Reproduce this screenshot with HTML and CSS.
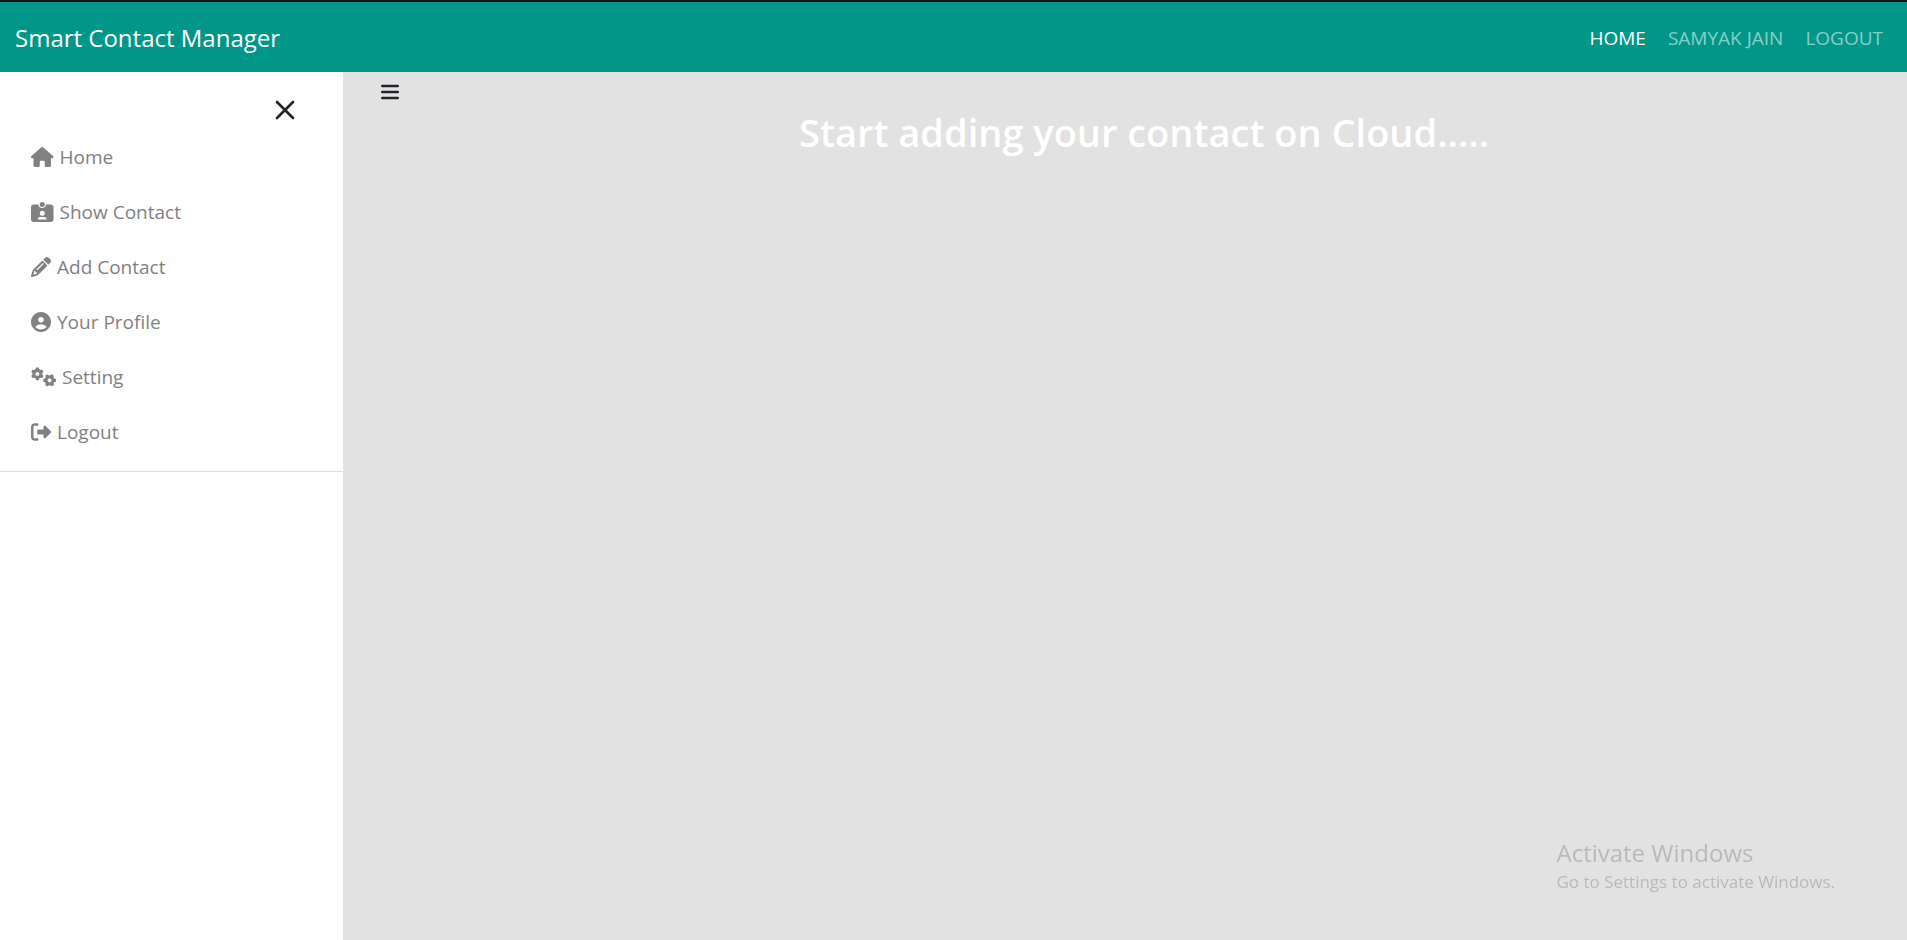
FILE: index.html
```html
<!DOCTYPE html>
<html lang="en">
<head>
<meta charset="utf-8">
<meta name="viewport" content="width=device-width, initial-scale=1">
<title>Smart Contact Manager</title>
<link rel="stylesheet" href="styles.css">
</head>
<body>
<header class="navbar">
  <a class="brand" href="#">Smart Contact Manager</a>
  <nav class="nav-links">
    <a class="nav-link active" href="#">HOME</a>
    <a class="nav-link" href="#">SAMYAK JAIN</a>
    <a class="nav-link" href="#">LOGOUT</a>
  </nav>
</header>
<div class="layout">
  <aside class="sidebar">
    <button class="close" type="button" aria-label="Close menu">
      <svg class="close-icon" viewBox="0 0 20 20"><path d="M2 2L18 18M18 2L2 18" fill="none" stroke="currentColor" stroke-width="2.6" stroke-linecap="round"/></svg>
    </button>
    <nav class="menu">
      <a class="item" href="#"><svg class="icon" viewBox="0 0 576 512"><path d="M575.8 255.5c0 18-15 32.1-32 32.1h-32l.7 160.2c0 2.7-.2 5.4-.5 8.1V472c0 22.1-17.9 40-40 40H392c-22.1 0-40-17.9-40-40V384c0-17.7-14.3-32-32-32H256c-17.7 0-32 14.3-32 32v88c0 22.1-17.9 40-40 40H104c-22.1 0-40-17.9-40-40V287.6H32c-18 0-32-14-32-32.1c0-9 3-17 10-24L266.4 8c7-7 15-8 22-8s15 2 21 7L564.8 231.5c8 7 12 15 11 24z"/></svg>Home</a>
      <a class="item" href="#"><svg class="icon" viewBox="0 0 576 512"><path fill-rule="evenodd" d="M288 0a64 64 0 1 1 0 128 64 64 0 1 1 0-128zM64 64h130c-6 52 40 92 94 92s100-40 94-92h130c35.3 0 64 28.7 64 64v320c0 35.3-28.7 64-64 64H64c-35.3 0-64-28.7-64-64V128c0-35.3 28.7-64 64-64zM176 437.300c0 5.900 4.800 10.700 10.700 10.700h202.600c5.900 0 10.700-4.800 10.700-10.700c0-29.500-23.900-53.300-53.300-53.300H229.300c-29.500 0-53.300 23.900-53.300 53.300zM288 352a64 64 0 1 0 0-128 64 64 0 1 0 0 128z"/></svg>Show Contact</a>
      <a class="item" href="#"><svg class="icon" viewBox="0 0 512 512"><path fill-rule="evenodd" d="M410.3 231l11.3-11.3-33.9-33.9-62.1-62.1L291.7 89.800l-11.3 11.300-22.600 22.600L58.600 322.900c-10.400 10.400-18 23.300-22.200 37.400L1 480.700c-2.500 8.400-.2 17.500 6.100 23.700s15.300 8.500 23.700 6.100l120.300-35.400c14.100-4.200 27-11.800 37.400-22.200L387.700 253.700 410.300 231zM160 399.400l-9.100 22.700c-4 3.100-8.500 5.400-13.300 6.900L59.400 452l23-78.100c1.400-4.900 3.800-9.400 6.900-13.300l22.700-9.100v32c0 8.800 7.200 16 16 16h32zM362.700 18.700L348.300 33.200 325.700 55.800 314.300 67.100l33.900 33.900 62.100 62.100 33.900 33.900 11.300-11.300 22.600-22.600 14.500-14.500c25-25 25-65.500 0-90.500L453.300 18.700c-25-25-65.500-25-90.500 0zm-47.400 168l-144 144c-6.200 6.200-16.400 6.200-22.600 0s-6.200-16.400 0-22.600l144-144c6.200-6.200 16.400-6.200 22.600 0s6.200 16.400 0 22.600z"/></svg>Add Contact</a>
      <a class="item" href="#"><svg class="icon" viewBox="0 0 512 512"><path fill-rule="evenodd" d="M399 384.200C376.900 345.800 335.400 320 288 320H224c-47.400 0-88.900 25.800-111 64.200c35.200 39.200 86.200 63.800 143 63.800s107.800-24.700 143-63.800zM512 256c0 141.400-114.600 256-256 256S0 397.400 0 256S114.600 0 256 0S512 114.600 512 256zM256 272c39.800 0 72-32.200 72-72s-32.200-72-72-72s-72 32.200-72 72s32.200 72 72 72z"/></svg>Your Profile</a>
      <a class="item" href="#"><svg class="icon" viewBox="0 0 640 512"><g fill="none" stroke="currentColor"><g transform="translate(164 176)"><circle r="90" stroke-width="78"/><path stroke-width="78" d="M0-100V-162M0 100V162M87-50L140-81M-87 50L-140 81M87 50L140 81M-87-50L-140-81"/></g><g transform="translate(476 342) rotate(30)"><circle r="90" stroke-width="78"/><path stroke-width="78" d="M0-100V-162M0 100V162M87-50L140-81M-87 50L-140 81M87 50L140 81M-87-50L-140-81"/></g></g></svg>Setting</a>
      <a class="item" href="#"><svg class="icon" viewBox="0 0 512 512"><path d="M377.900 105.900L500.700 228.700c7.200 7.200 11.300 17.100 11.300 27.300s-4.100 20.100-11.300 27.300L377.900 406.100c-6.400 6.400-15 9.900-24 9.900c-18.700 0-33.900-15.200-33.900-33.900V320H192c-17.700 0-32-14.300-32-32v-64c0-17.700 14.300-32 32-32h128v-62.100c0-18.700 15.200-33.900 33.900-33.900c9 0 17.600 3.600 24 9.900zM160 96H96c-17.700 0-32 14.300-32 32v256c0 17.700 14.300 32 32 32h64c17.700 0 32 14.300 32 32s-14.300 32-32 32H96c-53 0-96-43-96-96V128C0 75 43 32 96 32h64c17.700 0 32 14.300 32 32s-14.300 32-32 32z"/></svg>Logout</a>
    </nav>
    <hr class="divider">
  </aside>
  <main class="content">
    <button class="toggle" type="button" aria-label="Toggle menu">
      <svg class="toggle-icon" viewBox="0 0 18 16"><path d="M1.300 2H16.700M1.300 8H16.700M1.300 14H16.700" fill="none" stroke="currentColor" stroke-width="2.600" stroke-linecap="round"/></svg>
    </button>
    <h1 class="headline">Start adding your contact on Cloud.....</h1>
  </main>
</div>
<div class="watermark">
  <p class="watermark-title">Activate Windows</p>
  <p class="watermark-text">Go to Settings to activate Windows.</p>
</div>
</body>
</html>
```
FILE: styles.css
```css
* { box-sizing: border-box; }
body {
  margin: 0;
  min-height: 100vh;
  display: flex;
  flex-direction: column;
  background: #e2e2e2;
  color: #212529;
  font-family: "Open Sans", "Noto Sans", sans-serif;
  font-size: 19px;
}
a { text-decoration: none; }
button {
  display: block;
  padding: 0;
  border: 0;
  background: none;
  color: inherit;
  cursor: pointer;
}
.navbar {
  display: flex;
  align-items: center;
  justify-content: space-between;
  padding: 18px 24px 16px 15px;
  border-top: 2px solid #111;
  background: #009688;
}
.brand {
  color: #fff;
  font-size: 24px;
  line-height: 36px;
}
.nav-links { display: flex; gap: 22px; }
.nav-link { color: rgba(255, 255, 255, 0.55); }
.nav-link.active { color: #fff; }
.layout { flex: 1; display: flex; }
.sidebar {
  width: 18%;
  padding-top: 28px;
  background: #fff;
}
.close { margin: 0 48px 0 auto; }
.close-icon { display: block; width: 20px; height: 20px; }
.menu { padding-top: 9px; }
.item {
  display: flex;
  align-items: center;
  gap: 6px;
  height: 55px;
  padding-left: 31px;
  color: #818181;
}
.icon { height: 20px; fill: currentColor; }
.divider {
  height: 1px;
  margin: 12px 0 0;
  border: 0;
  background: #dedede;
}
.content { flex: 1; padding-top: 12px; }
.toggle { margin-left: 38px; }
.toggle-icon { display: block; width: 18px; height: 16px; }
.headline {
  margin: 8px 0 0;
  padding-left: 38px;
  color: #fff;
  font-size: 38px;
  font-weight: 600;
  line-height: 48px;
  text-align: center;
}
.watermark {
  position: fixed;
  right: 72px;
  bottom: 44px;
  color: #b9b9b9;
}
.watermark p { margin: 0; }
.watermark-title { font-size: 24px; line-height: 30px; }
.watermark-text { font-size: 17px; line-height: 28px; }
```
